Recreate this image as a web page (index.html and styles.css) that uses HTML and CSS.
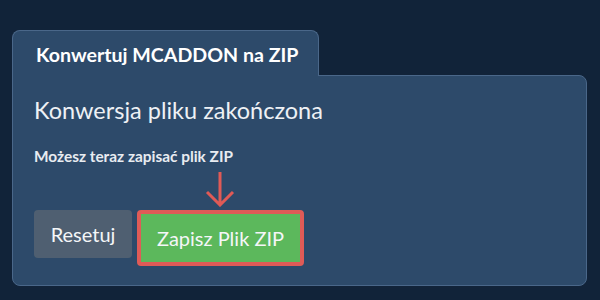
FILE: index.html
```html
<!DOCTYPE html>
<html lang="pl">

<head>
    <meta charset="UTF-8">
    <meta name="viewport" content="width=device-width, initial-scale=1.0">
    <title>Konwertuj MCADDON na ZIP</title>
    <link rel="stylesheet" href="styles.css">
</head>

<body>
    <div class="card">
        <div class="tab">Konwertuj MCADDON na ZIP</div>

        <div class="panel">
            <h2>Konwersja pliku zakończona</h2>
            <p class="hint">Możesz teraz zapisać plik ZIP</p>

            <div class="actions">
                <button type="button" class="btn reset-btn">Resetuj</button>
                <div class="save-wrap">
                    <svg class="arrow" width="30" height="36" viewBox="0 0 30 36">
                        <path d="M15 1 V34 M2 21 L15 34 L28 21" fill="none" stroke="#e05a56" stroke-width="3" />
                    </svg>
                    <button type="button" class="btn save-btn">Zapisz Plik ZIP</button>
                </div>
            </div>
        </div>
    </div>
</body>

</html>
```

FILE: styles.css
```css
body {
    margin: 0;
    background-color: #112339;
    font-family: Lato, "Open Sans", sans-serif;
    color: #f2f4f7;
}

.card {
    padding: 30px 13px 0 12px;
}

.tab {
    position: relative;
    z-index: 1;
    width: 307px;
    height: 46px;
    box-sizing: border-box;
    padding: 12px 0 0 23px;
    margin-bottom: -1px;
    background-color: #2d4a6a;
    border: 1px solid #4a6789;
    border-bottom: none;
    border-radius: 8px 8px 0 0;
    font-size: 19.6px;
    font-weight: bold;
    color: #ffffff;
}

.panel {
    height: 211px;
    box-sizing: border-box;
    padding: 20px 21px 0 21px;
    background-color: #2d4a6a;
    border: 1px solid #4a6789;
    border-radius: 0 8px 8px 8px;
}

h2 {
    margin: 0;
    font-size: 23.5px;
    font-weight: normal;
    color: #eef1f5;
}

.hint {
    margin: 23px 0 0 0;
    font-size: 15.4px;
    font-weight: bold;
    color: #e8ecf1;
}

.actions {
    display: flex;
    align-items: flex-start;
    margin-top: 45px;
}

.btn {
    height: 48px;
    border: none;
    border-radius: 4px;
    font-family: Lato, "Open Sans", sans-serif;
    font-size: 20px;
    font-weight: normal;
    color: #f4f6f8;
    cursor: pointer;
}

.reset-btn {
    width: 98px;
    background-color: #4f5f71;
}

.save-wrap {
    position: relative;
    margin-left: 5px;
}

.save-btn {
    width: 167px;
    height: 56px;
    background-color: #5cb85c;
    border: 4px solid #df5b57;
    border-radius: 4px;
}

.arrow {
    position: absolute;
    left: 68px;
    top: -39px;
}
```
